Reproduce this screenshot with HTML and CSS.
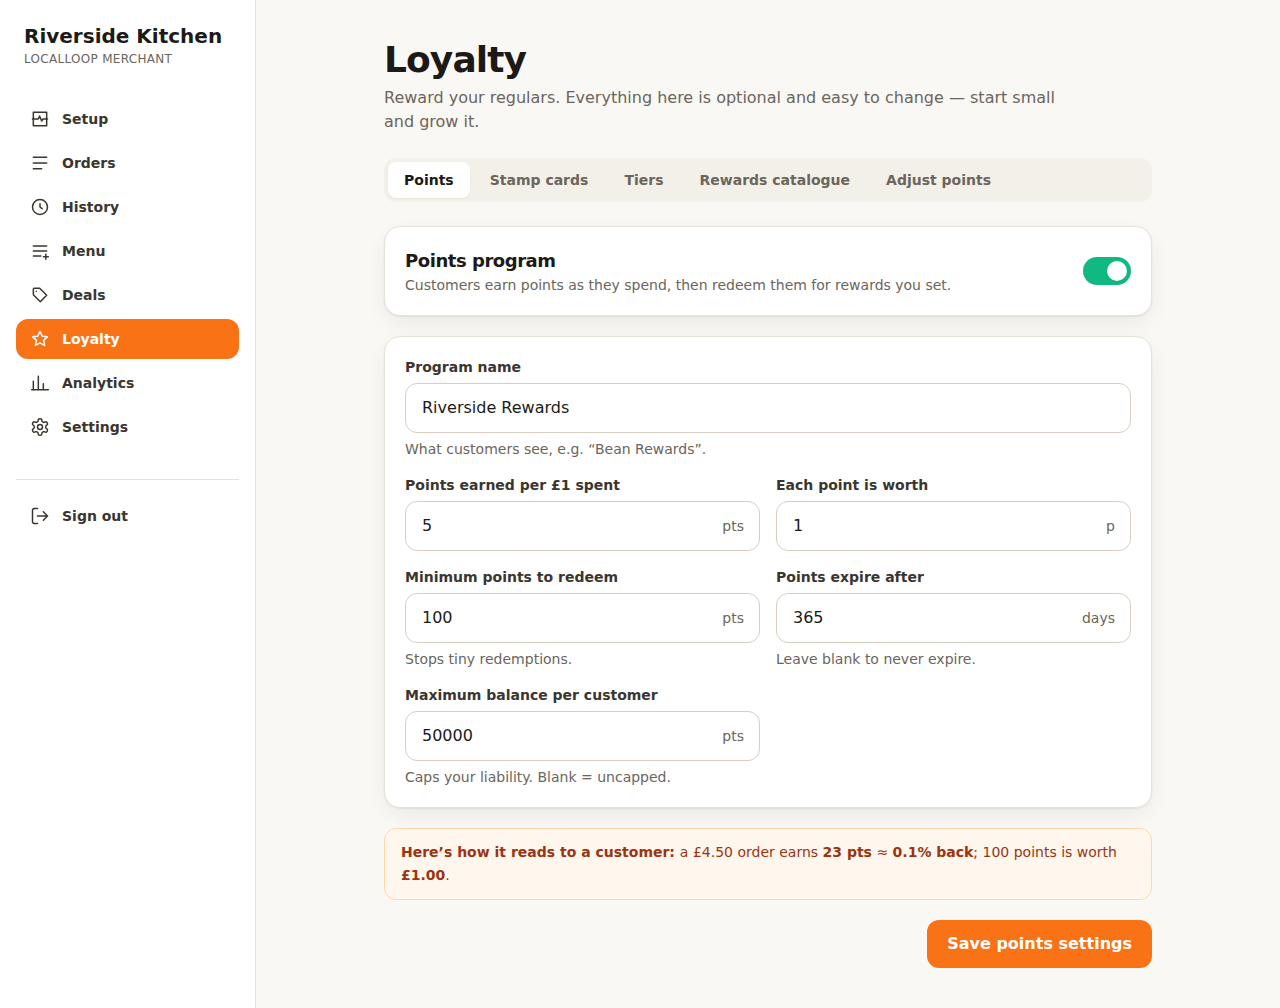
FILE: index.html
```html
<!DOCTYPE html>
<html lang="en">
  <head>
    <meta charset="UTF-8" />
    <meta name="viewport" content="width=device-width, initial-scale=1.0" />
    <title>Loyalty - Riverside Kitchen</title>
    <link rel="stylesheet" href="styles.css">
  </head>
  <body>
    <div class="layout">
      <aside class="sidebar">
        <div class="brand">
          <div class="brand-name">Riverside Kitchen</div>
          <div class="brand-sub">LOCALLOOP MERCHANT</div>
        </div>

        <nav class="nav">
          <a class="nav-item">
            <svg class="icon" viewBox="0 0 24 24"><path d="M4 4h16v16H4zM3 12h7l1.5-3.5 2.5 6 1.5-2.5H21" /></svg>
            Setup
          </a>
          <a class="nav-item">
            <svg class="icon" viewBox="0 0 24 24"><path d="M4 5h16M4 12h16M4 19h10" /></svg>
            Orders
          </a>
          <a class="nav-item">
            <svg class="icon" viewBox="0 0 24 24"><circle cx="12" cy="12" r="9" /><path d="M12 8v4l2.5 2" /></svg>
            History
          </a>
          <a class="nav-item">
            <svg class="icon" viewBox="0 0 24 24"><path d="M4 6h16M4 12h16M4 18h9M19 16v6M16 19h6" /></svg>
            Menu
          </a>
          <a class="nav-item">
            <svg class="icon" viewBox="0 0 24 24"><path d="M4 5a1 1 0 0 1 1-1h6.6L20 12.4 12.4 20 4 11.6zM7.5 7.5h.01" /></svg>
            Deals
          </a>
          <a class="nav-item active">
            <svg class="icon" viewBox="0 0 24 24"><path d="M12 3l2.7 5.6 6.1.8-4.5 4.2 1.2 6.1-5.5-3-5.5 3 1.2-6.1-4.5-4.2 6.1-.8z" /></svg>
            Loyalty
          </a>
          <a class="nav-item">
            <svg class="icon" viewBox="0 0 24 24"><path d="M2 20h20M4 20V10M10 20V4M16 20v-7" /></svg>
            Analytics
          </a>
          <a class="nav-item">
            <svg class="icon" viewBox="0 0 24 24"><circle cx="12" cy="12" r="3" /><path d="M12.22 2h-.44a2 2 0 0 0-2 2v.18a2 2 0 0 1-1 1.73l-.43.25a2 2 0 0 1-2 0l-.15-.08a2 2 0 0 0-2.73.73l-.22.38a2 2 0 0 0 .73 2.73l.15.1a2 2 0 0 1 1 1.72v.51a2 2 0 0 1-1 1.74l-.15.09a2 2 0 0 0-.73 2.73l.22.38a2 2 0 0 0 2.73.73l.15-.08a2 2 0 0 1 2 0l.43.25a2 2 0 0 1 1 1.73V20a2 2 0 0 0 2 2h.44a2 2 0 0 0 2-2v-.18a2 2 0 0 1 1-1.73l.43-.25a2 2 0 0 1 2 0l.15.08a2 2 0 0 0 2.73-.73l.22-.39a2 2 0 0 0-.73-2.73l-.15-.08a2 2 0 0 1-1-1.74v-.5a2 2 0 0 1 1-1.74l.15-.09a2 2 0 0 0 .73-2.73l-.22-.38a2 2 0 0 0-2.73-.73l-.15.08a2 2 0 0 1-2 0l-.43-.25a2 2 0 0 1-1-1.73V4a2 2 0 0 0-2-2z" /></svg>
            Settings
          </a>
        </nav>

        <div class="sidebar-footer">
          <a class="nav-item">
            <svg class="icon" viewBox="0 0 24 24"><path d="M9 21H5a2 2 0 0 1-2-2V5a2 2 0 0 1 2-2h4M16 17l5-5-5-5M21 12H9" /></svg>
            Sign out
          </a>
        </div>
      </aside>

      <main class="main">
        <div class="content">
          <header class="page-header">
            <h1>Loyalty</h1>
            <p>Reward your regulars. Everything here is optional and easy to change — start small and grow it.</p>
          </header>

          <div class="tabs">
            <button class="tab active">Points</button>
            <button class="tab">Stamp cards</button>
            <button class="tab">Tiers</button>
            <button class="tab">Rewards catalogue</button>
            <button class="tab">Adjust points</button>
          </div>

          <div class="stack">
            <section class="card program">
              <div>
                <h2>Points program</h2>
                <p>Customers earn points as they spend, then redeem them for rewards you set.</p>
              </div>
              <button class="toggle" aria-label="Points program"><span class="knob"></span></button>
            </section>

            <section class="card form">
              <div class="field wide">
                <label for="name">Program name</label>
                <div class="input"><input id="name" type="text" value="Riverside Rewards" /></div>
                <div class="hint">What customers see, e.g. “Bean Rewards”.</div>
              </div>
              <div class="field">
                <label for="earn">Points earned per £1 spent</label>
                <div class="input"><input id="earn" type="text" value="5" /><span>pts</span></div>
              </div>
              <div class="field">
                <label for="worth">Each point is worth</label>
                <div class="input"><input id="worth" type="text" value="1" /><span>p</span></div>
              </div>
              <div class="field">
                <label for="min">Minimum points to redeem</label>
                <div class="input"><input id="min" type="text" value="100" /><span>pts</span></div>
                <div class="hint">Stops tiny redemptions.</div>
              </div>
              <div class="field">
                <label for="expire">Points expire after</label>
                <div class="input"><input id="expire" type="text" value="365" /><span>days</span></div>
                <div class="hint">Leave blank to never expire.</div>
              </div>
              <div class="field">
                <label for="max">Maximum balance per customer</label>
                <div class="input"><input id="max" type="text" value="50000" /><span>pts</span></div>
                <div class="hint">Caps your liability. Blank = uncapped.</div>
              </div>
            </section>

            <div class="notice">
              <strong>Here’s how it reads to a customer: </strong>a £4.50 order earns <strong>23 pts</strong> ≈ <strong>0.1% back</strong>; 100 points is worth <strong>£1.00</strong>.
            </div>

            <div class="actions">
              <button class="save">Save points settings</button>
            </div>
          </div>
        </div>
      </main>
    </div>
  </body>
</html>
```
FILE: styles.css
```css
* {
  margin: 0;
  padding: 0;
  box-sizing: border-box;
}

body {
  font-family: "DejaVu Sans", sans-serif;
  font-size: 16px;
  line-height: 24px;
  color: #1c1a17;
  background: #faf8f5;
}

button,
input {
  font: inherit;
  color: inherit;
  border: none;
  background: none;
}

.layout {
  display: flex;
  min-height: 100vh;
}

/* Sidebar */
.sidebar {
  width: 256px;
  flex-shrink: 0;
  padding: 24px 16px;
  background: #fff;
  border-right: 1px solid #e7e2d9;
}

.brand {
  padding: 0 8px;
  margin-bottom: 32px;
}

.brand-name {
  font-size: 20px;
  line-height: 25px;
  font-weight: 700;
  white-space: nowrap;
}

.brand-sub {
  margin-top: 2px;
  font-size: 12px;
  line-height: 16px;
  letter-spacing: 0.3px;
  color: #6b655c;
}

.nav {
  display: flex;
  flex-direction: column;
  gap: 4px;
}

.nav-item {
  display: flex;
  align-items: center;
  gap: 12px;
  height: 40px;
  padding: 0 14px;
  border-radius: 12px;
  font-size: 14px;
  font-weight: 600;
  color: #3a362f;
}

.nav-item.active {
  background: #f97316;
  color: #fff;
}

.icon {
  width: 20px;
  height: 20px;
  fill: none;
  stroke: currentColor;
  stroke-width: 1.8;
  stroke-linecap: round;
  stroke-linejoin: round;
}

.sidebar-footer {
  margin-top: 32px;
  padding-top: 16px;
  border-top: 1px solid #e7e2d9;
}

/* Page */
.main {
  flex: 1;
  padding: 40px 0;
}

.content {
  width: 768px;
  margin: 0 auto;
}

.page-header {
  margin-bottom: 24px;
}

.page-header h1 {
  font-size: 36px;
  line-height: 40px;
  font-weight: 700;
  letter-spacing: -0.9px;
}

.page-header p {
  max-width: 672px;
  margin-top: 6px;
  color: #6b655c;
}

.tabs {
  display: flex;
  gap: 4px;
  padding: 4px;
  margin-bottom: 24px;
  border-radius: 12px;
  background: #f3f0e9;
}

.tab {
  padding: 8px 16px;
  border-radius: 8px;
  font-size: 14px;
  line-height: 20px;
  font-weight: 600;
  color: #6b655c;
}

.tab.active {
  background: #fff;
  color: #1c1a17;
  box-shadow: 0 1px 2px rgba(28, 26, 23, 0.06);
}

.stack {
  display: flex;
  flex-direction: column;
  gap: 20px;
}

.card {
  padding: 20px;
  background: #fff;
  border: 1px solid #e7e2d9;
  border-radius: 16px;
  box-shadow: 0 1px 2px rgba(28, 26, 23, 0.06), 0 8px 24px -6px rgba(28, 26, 23, 0.1);
}

.program {
  display: flex;
  align-items: center;
  justify-content: space-between;
}

.program h2 {
  font-size: 18px;
  line-height: 28px;
  font-weight: 700;
  letter-spacing: -0.45px;
}

.program p {
  font-size: 14px;
  line-height: 20px;
  color: #6b655c;
}

.toggle {
  display: flex;
  justify-content: flex-end;
  width: 48px;
  height: 28px;
  padding: 4px;
  border-radius: 14px;
  background: #10b981;
}

.knob {
  width: 20px;
  height: 20px;
  border-radius: 50%;
  background: #fff;
  box-shadow: 0 1px 2px rgba(28, 26, 23, 0.1);
}

.form {
  display: grid;
  grid-template-columns: 1fr 1fr;
  gap: 16px;
}

.field {
  display: flex;
  flex-direction: column;
  gap: 6px;
  font-size: 14px;
  line-height: 20px;
}

.field.wide {
  grid-column: span 2;
}

.field label {
  font-weight: 600;
  color: #3a362f;
}

.input {
  display: flex;
  align-items: center;
  height: 50px;
  padding: 0 15px 0 16px;
  border: 1px solid #d6cec1;
  border-radius: 12px;
  background: #fff;
}

.input input {
  flex: 1;
  min-width: 0;
  font-size: 16px;
  line-height: 24px;
  outline: none;
}

.input span,
.hint {
  color: #6b655c;
}

.notice {
  padding: 12px 16px;
  border: 1px solid #fed7aa;
  border-radius: 12px;
  background: #fff6ed;
  font-size: 14px;
  line-height: 22.75px;
  color: #9a3412;
}

.actions {
  display: flex;
  justify-content: flex-end;
}

.save {
  height: 48px;
  padding: 0 20px;
  border-radius: 12px;
  background: #f97316;
  color: #fff;
  font-weight: 600;
}
```
